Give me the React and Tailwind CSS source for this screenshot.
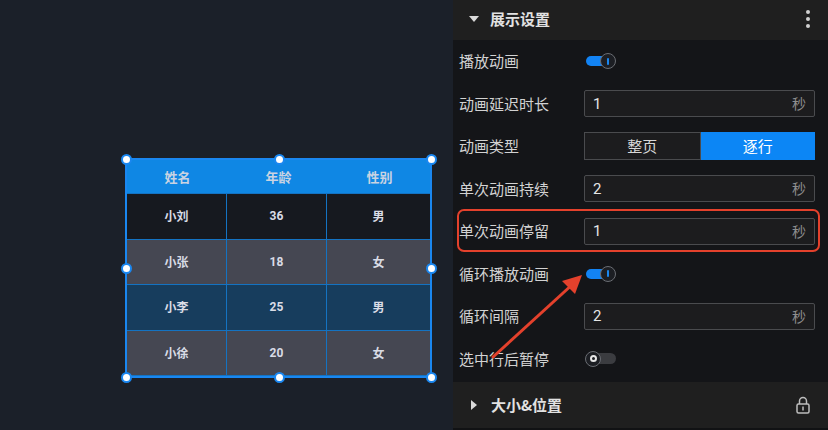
import React from 'react'

const font = { fontFamily: '"Noto Sans CJK SC", "Noto Sans", sans-serif' }

const rows = [
  { name: '小刘', age: '36', sex: '男', bg: 'bg-[#16191f]' },
  { name: '小张', age: '18', sex: '女', bg: 'bg-[#454752]' },
  { name: '小李', age: '25', sex: '男', bg: 'bg-[#173d5d]' },
  { name: '小徐', age: '20', sex: '女', bg: 'bg-[#454752]' },
]

function Handle({ cls }) {
  return <div className={'absolute w-[11px] h-[11px] rounded-full bg-white border-2 border-[#1a87f0] ' + cls} />
}

function TableWidget() {
  return (
    <div className="absolute left-[125px] top-[158px] w-[307px] h-[220px] border-2 border-[#1a87f0]">
      <div className="flex flex-col w-full h-full">
        <div className="flex h-[33px] bg-[#0f87e4] text-[13px] font-bold text-[#c9d3e2]">
          <div className="flex-1 flex items-center justify-center">姓名</div>
          <div className="flex-1 flex items-center justify-center">年龄</div>
          <div className="flex-1 flex items-center justify-center">性别</div>
        </div>
        <div className="flex-1 flex flex-col border-t border-[#1473c2]">
          {rows.map((r, i) => (
            <div key={i} className={'flex flex-1 text-[12px] font-bold text-[#d9dce6] border-b border-[#1473c2] ' + r.bg}>
              <div className="w-[100px] flex items-center justify-center border-r border-[#1473c2]">{r.name}</div>
              <div className="w-[100px] flex items-center justify-center border-r border-[#1473c2]" style={{ fontFamily: 'Roboto, sans-serif' }}>{r.age}</div>
              <div className="flex-1 flex items-center justify-center">{r.sex}</div>
            </div>
          ))}
        </div>
      </div>
      <Handle cls="-left-[6.5px] -top-[6.5px]" />
      <Handle cls="left-[147px] -top-[6.5px]" />
      <Handle cls="-right-[6.5px] -top-[6.5px]" />
      <Handle cls="-left-[6.5px] top-[103px]" />
      <Handle cls="-right-[6.5px] top-[103px]" />
      <Handle cls="-left-[6.5px] -bottom-[6.5px]" />
      <Handle cls="left-[147px] -bottom-[6.5px]" />
      <Handle cls="-right-[6.5px] -bottom-[6.5px]" />
    </div>
  )
}

function SwitchOn() {
  return (
    <div className="relative w-[30px] h-[16px] flex items-center">
      <div className="w-[22px] h-[10px] rounded-full bg-[#1283f4]" />
      <div className="absolute left-[14px] top-0 w-[16px] h-[16px] rounded-full bg-[#1c1e23] border border-[#6a6d73] flex items-center justify-center">
        <div className="w-[2px] h-[7px] bg-[#1a87f0] rounded-sm" />
      </div>
    </div>
  )
}

function SwitchOff() {
  return (
    <div className="relative w-[31px] h-[16px] flex items-center">
      <div className="absolute left-[2px] w-[29px] h-[11px] rounded-full bg-[#3b3c40]" />
      <div className="absolute left-0 top-0 w-[16px] h-[16px] rounded-full bg-[#1c1e23] border border-[#6a6d73] flex items-center justify-center">
        <div className="w-[7px] h-[7px] rounded-full border-2 border-[#e6e6e6]" />
      </div>
    </div>
  )
}

function Input({ value }) {
  return (
    <div className="w-[231px] h-[27px] rounded-[2px] border border-[#4a4b4e] bg-[#1c1c1e] flex items-center justify-between px-[8px]">
      <span className="text-[15px] text-[#e6e6e6]" style={{ fontFamily: 'Roboto, sans-serif' }}>{value}</span>
      <span className="text-[14px] text-[#8e8e8e]">秒</span>
    </div>
  )
}

function Row({ label, children, extra }) {
  return (
    <div className="relative h-[42.5px] flex items-center pl-[6px]">
      <div className="w-[125px] text-[15px] text-[#d2d2d2]">{label}</div>
      {children}
      {extra}
    </div>
  )
}

export default function App() {
  return (
    <div className="relative w-[828px] h-[430px] flex overflow-hidden" style={font}>
      <div className="relative w-[453px] h-full bg-[#1b2029]">
        <TableWidget />
      </div>
      <div className="flex-1 flex flex-col bg-[#141518]">
        <div className="h-[40px] bg-[#1f1f1f] flex items-center pl-[16px] pr-[18px] pb-[2px]">
          <svg width="10" height="6" viewBox="0 0 10 6" className="mr-[11px]"><path d="M0 0h10L5 6z" fill="#d9d9d9" /></svg>
          <span className="text-[15px] font-bold text-[#e2e2e2]">展示设置</span>
          <div className="ml-auto flex flex-col gap-[3px]">
            <div className="w-[4px] h-[4px] rounded-full bg-[#d0d0d0]" />
            <div className="w-[4px] h-[4px] rounded-full bg-[#d0d0d0]" />
            <div className="w-[4px] h-[4px] rounded-full bg-[#d0d0d0]" />
          </div>
        </div>
        <div className="pt-[0px]">
          <Row label="播放动画"><div className="ml-[2px]"><SwitchOn /></div></Row>
          <Row label="动画延迟时长"><Input value="1" /></Row>
          <Row label="动画类型">
            <div className="w-[231px] h-[28px] flex text-[15px]">
              <div className="flex-1 flex items-center justify-center border border-[#4a4b4e] bg-[#1c1c1e] text-[#d8d8d8]">整页</div>
              <div className="flex-1 flex items-center justify-center bg-[#0c86f5] text-white">逐行</div>
            </div>
          </Row>
          <Row label="单次动画持续"><Input value="2" /></Row>
          <Row
            label="单次动画停留"
            extra={<div className="absolute left-[4px] right-[8px] -top-[1px] bottom-[1px] rounded-[7px] border-2 border-[#e4412c]" />}
          >
            <Input value="1" />
          </Row>
          <Row label="循环播放动画"><div className="ml-[2px]"><SwitchOn /></div></Row>
          <Row label="循环间隔"><Input value="2" /></Row>
          <Row label="选中行后暂停"><div className="ml-[1px]"><SwitchOff /></div></Row>
        </div>
        <div className="mt-auto h-[48px] bg-[#1f1f1f] flex items-center pl-[18px] pr-[18px] border-b-2 border-[#111214]">
          <svg width="6" height="10" viewBox="0 0 6 10" className="mr-[14px]"><path d="M0 0v10l6-5z" fill="#d9d9d9" /></svg>
          <span className="text-[15px] font-bold text-[#e2e2e2]">大小&amp;位置</span>
          <svg width="14" height="18" viewBox="0 0 14 18" className="ml-auto">
            <path d="M3.5 8V5a3.5 3.5 0 0 1 7 0v3" fill="none" stroke="#bdbdbd" strokeWidth="1.5" />
            <rect x="1" y="8" width="12" height="9" rx="1.5" fill="none" stroke="#bdbdbd" strokeWidth="1.5" />
            <rect x="6.25" y="10.5" width="1.5" height="4" fill="#bdbdbd" />
          </svg>
        </div>
      </div>
      <svg className="absolute inset-0 pointer-events-none" width="828" height="430" viewBox="0 0 828 430">
        <line x1="493" y1="357" x2="574" y2="283" stroke="#e4412c" strokeWidth="3" strokeLinecap="round" />
        <path d="M582 275 L562 281 L575 294 Z" fill="#e4412c" />
      </svg>
    </div>
  )
}
